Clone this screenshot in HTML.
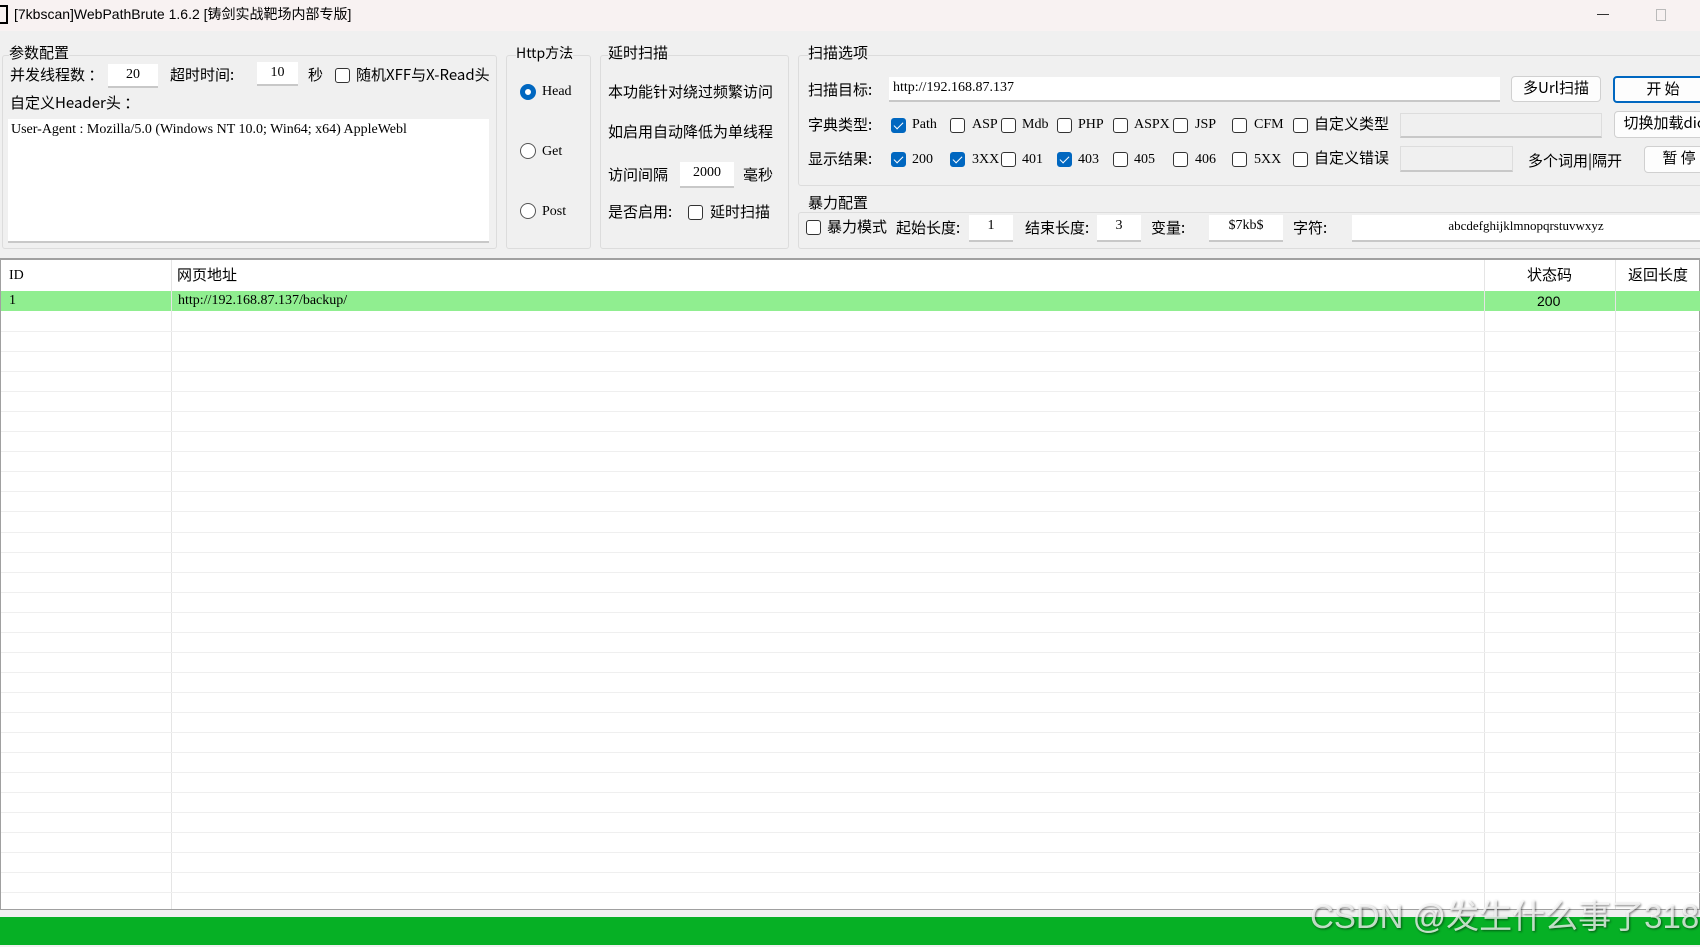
<!DOCTYPE html>
<html><head><meta charset="utf-8"><style>
*{margin:0;padding:0;box-sizing:border-box}
body{width:1700px;height:947px;overflow:hidden;background:#f0f0f0;position:relative;font-family:"Liberation Serif","Noto Sans CJK SC",serif;font-size:15px;color:#000}
.a{position:absolute;white-space:nowrap;line-height:18px}
.c{font-family:"Noto Sans CJK SC","Liberation Sans",sans-serif;font-size:15px}
.g{position:absolute;border:1px solid #dcdcdc;border-radius:3px}
.in{position:absolute;background:#fff;border-bottom:2px solid #c8c8c8;font-family:"Liberation Serif",serif;font-size:14px;text-align:center;line-height:22px}
.cb{position:absolute;width:15px;height:15px;border:1px solid #333;border-radius:3px;background:#fff}
.ck{background:#0067c0;border-color:#0067c0}
.ck::after{content:"";position:absolute;left:4px;top:1px;width:4px;height:8px;border:solid #fff;border-width:0 1.5px 1.5px 0;transform:rotate(45deg)}
.rd{position:absolute;width:16px;height:16px;border:1px solid #555;border-radius:50%;background:#fff}
.btn{position:absolute;background:#fdfdfd;border:1px solid #d0d0d0;border-radius:4px;text-align:center;line-height:22px}
.hl{position:absolute;left:1px;width:1699px;height:1px;background:#efefef}
.vl{position:absolute;top:260px;width:1px;height:649px;background:#e5e5e5}
</style></head><body>
<div style="position:absolute;left:0;top:0;width:1700px;height:31px;background:#f8f2f2"></div>
<div style="position:absolute;left:0;top:5px;width:8px;height:19px;border:2px solid #000;border-left:none"></div>
<div class="a" style="left:14px;top:5px;font-family:'Liberation Sans','Noto Sans CJK SC',sans-serif;font-size:14px">[7kbscan]WebPathBrute 1.6.2 [铸剑实战靶场内部专版]</div>
<div style="position:absolute;left:1597px;top:14px;width:12px;height:1px;background:#333"></div>
<div style="position:absolute;left:1656px;top:9px;width:10px;height:12px;border:1px solid #bbb"></div>

<!-- group 1 -->
<div class="g" style="left:2px;top:55px;width:495px;height:194px"></div>
<div class="a c" style="left:9px;top:44px;background:#f0f0f0">参数配置</div>
<div class="a c" style="left:10px;top:66px">并发线程数 ：</div>
<div class="in" style="left:108px;top:64px;width:50px;height:24px">20</div>
<div class="a c" style="left:170px;top:66px">超时时间:</div>
<div class="in" style="left:257px;top:62px;width:41px;height:24px">10</div>
<div class="a c" style="left:308px;top:66px">秒</div>
<div class="cb" style="left:335px;top:68px"></div>
<div class="a c" style="left:356px;top:66px">随机XFF与X-Read头</div>
<div class="a c" style="left:10px;top:94px">自定义Header头 ：</div>
<div style="position:absolute;left:8px;top:119px;width:481px;height:124px;background:#fff;border-bottom:2px solid #c8c8c8"></div>
<div class="a" style="left:11px;top:121px;font-size:14px">User-Agent : Mozilla/5.0 (Windows NT 10.0; Win64; x64) AppleWebl</div>

<!-- http -->
<div class="g" style="left:506px;top:55px;width:85px;height:194px"></div>
<div class="a c" style="left:516px;top:44px;background:#f0f0f0;font-size:14px">Http方法</div>
<div class="rd" style="left:520px;top:84px;border:5px solid #0067c0"></div>
<div class="a" style="left:542px;top:83px;font-size:14px">Head</div>
<div class="rd" style="left:520px;top:143px"></div>
<div class="a" style="left:542px;top:143px;font-size:14px">Get</div>
<div class="rd" style="left:520px;top:203px"></div>
<div class="a" style="left:542px;top:203px;font-size:14px">Post</div>

<!-- delay -->
<div class="g" style="left:600px;top:55px;width:189px;height:194px"></div>
<div class="a c" style="left:608px;top:44px;background:#f0f0f0">延时扫描</div>
<div class="a c" style="left:608px;top:83px">本功能针对绕过频繁访问</div>
<div class="a c" style="left:608px;top:123px">如启用自动降低为单线程</div>
<div class="a c" style="left:608px;top:166px">访问间隔</div>
<div class="in" style="left:680px;top:162px;width:54px;height:26px">2000</div>
<div class="a c" style="left:743px;top:166px">毫秒</div>
<div class="a c" style="left:608px;top:203px">是否启用:</div>
<div class="cb" style="left:688px;top:205px"></div>
<div class="a c" style="left:710px;top:203px">延时扫描</div>

<!-- scan options -->
<div class="g" style="left:798px;top:55px;width:910px;height:131px"></div>
<div class="a c" style="left:808px;top:44px;background:#f0f0f0">扫描选项</div>
<div class="a c" style="left:808px;top:81px">扫描目标:</div>
<div class="in" style="left:889px;top:77px;width:611px;height:25px;text-align:left;padding-left:4px">http://192.168.87.137</div>
<div class="btn" style="left:1511px;top:76px;width:90px;height:26px" ><span class="c">多Url扫描</span></div>
<div class="btn" style="left:1613px;top:76px;width:100px;height:27px;border:2px solid #0067c0"><span class="c">开 始</span></div>

<div class="a c" style="left:808px;top:116px">字典类型:</div>
<div class="cb ck" style="left:891px;top:118px"></div><div class="a" style="left:912px;top:116px;font-size:14px">Path</div>
<div class="cb" style="left:950px;top:118px"></div><div class="a" style="left:972px;top:116px;font-size:14px">ASP</div>
<div class="cb" style="left:1001px;top:118px"></div><div class="a" style="left:1022px;top:116px;font-size:14px">Mdb</div>
<div class="cb" style="left:1057px;top:118px"></div><div class="a" style="left:1078px;top:116px;font-size:14px">PHP</div>
<div class="cb" style="left:1113px;top:118px"></div><div class="a" style="left:1134px;top:116px;font-size:14px">ASPX</div>
<div class="cb" style="left:1173px;top:118px"></div><div class="a" style="left:1195px;top:116px;font-size:14px">JSP</div>
<div class="cb" style="left:1232px;top:118px"></div><div class="a" style="left:1254px;top:116px;font-size:14px">CFM</div>
<div class="cb" style="left:1293px;top:118px"></div><div class="a c" style="left:1314px;top:115px">自定义类型</div>
<div class="in" style="left:1400px;top:113px;width:202px;height:25px;background:#f0f0f0;border:1px solid #ddd;border-bottom:2px solid #c8c8c8"></div>
<div class="btn" style="left:1614px;top:111px;width:100px;height:27px"><span class="c">切换加载dic</span></div>

<div class="a c" style="left:808px;top:150px">显示结果:</div>
<div class="cb ck" style="left:891px;top:152px"></div><div class="a" style="left:912px;top:151px;font-size:14px">200</div>
<div class="cb ck" style="left:950px;top:152px"></div><div class="a" style="left:972px;top:151px;font-size:14px">3XX</div>
<div class="cb" style="left:1001px;top:152px"></div><div class="a" style="left:1022px;top:151px;font-size:14px">401</div>
<div class="cb ck" style="left:1057px;top:152px"></div><div class="a" style="left:1078px;top:151px;font-size:14px">403</div>
<div class="cb" style="left:1113px;top:152px"></div><div class="a" style="left:1134px;top:151px;font-size:14px">405</div>
<div class="cb" style="left:1173px;top:152px"></div><div class="a" style="left:1195px;top:151px;font-size:14px">406</div>
<div class="cb" style="left:1232px;top:152px"></div><div class="a" style="left:1254px;top:151px;font-size:14px">5XX</div>
<div class="cb" style="left:1293px;top:152px"></div><div class="a c" style="left:1314px;top:149px">自定义错误</div>
<div class="in" style="left:1400px;top:146px;width:113px;height:26px;background:#f0f0f0;border:1px solid #ddd;border-bottom:2px solid #c8c8c8"></div>
<div class="a c" style="left:1528px;top:152px">多个词用|隔开</div>
<div class="btn" style="left:1644px;top:146px;width:70px;height:27px"><span class="c">暂 停</span></div>

<!-- brute -->
<div class="g" style="left:798px;top:212px;width:910px;height:37px"></div>
<div class="a c" style="left:808px;top:194px;background:#f0f0f0">暴力配置</div>
<div class="cb" style="left:806px;top:220px"></div>
<div class="a c" style="left:827px;top:218px">暴力模式</div>
<div class="a c" style="left:896px;top:219px">起始长度:</div>
<div class="in" style="left:969px;top:215px;width:44px;height:27px">1</div>
<div class="a c" style="left:1025px;top:219px">结束长度:</div>
<div class="in" style="left:1097px;top:215px;width:44px;height:27px">3</div>
<div class="a c" style="left:1151px;top:219px">变量:</div>
<div class="in" style="left:1209px;top:215px;width:74px;height:27px">$7kb$</div>
<div class="a c" style="left:1293px;top:219px">字符:</div>
<div class="in" style="left:1352px;top:215px;width:348px;height:27px;font-size:13px">abcdefghijklmnopqrstuvwxyz</div>

<!-- table -->
<div style="position:absolute;left:0;top:258px;width:1700px;height:652px;background:#fff;border:1px solid #a0a0a0;border-top:2px solid #a0a0a0"></div>
<div style="position:absolute;left:1px;top:291px;width:1699px;height:20px;background:#90ee90"></div>
<div class="vl" style="left:171px"></div>
<div class="vl" style="left:1484px"></div>
<div class="vl" style="left:1615px"></div>
<div class="a" style="left:9px;top:267px;font-size:14px">ID</div>
<div class="a c" style="left:177px;top:266px">网页地址</div>
<div class="a c" style="left:1527px;top:266px">状态码</div>
<div class="a c" style="left:1628px;top:266px">返回长度</div>
<div class="a" style="left:9px;top:292px;font-size:14px">1</div>
<div class="a" style="left:178px;top:292px;font-size:14px">http://192.168.87.137/backup/</div>
<div class="a" style="left:1537px;top:292px;font-size:14px;font-family:'Liberation Sans',sans-serif">200</div>
<div id="lines"></div>
<script>
var h='';for(var y=331;y<909;y+=20.05){h+='<div class="hl" style="top:'+Math.round(y)+'px"></div>';}
document.getElementById('lines').innerHTML=h;
</script>
<div style="position:absolute;left:0;top:917px;width:1700px;height:28px;background:#06b025"></div>
<div class="a" style="left:1310px;top:898px;font-family:'Liberation Sans','Noto Sans CJK SC',sans-serif;font-size:33px;line-height:38px;color:rgba(255,255,255,0.75);text-shadow:1px 1px 2px rgba(0,0,0,0.5)">CSDN @发生什么事了318</div>
</body></html>
